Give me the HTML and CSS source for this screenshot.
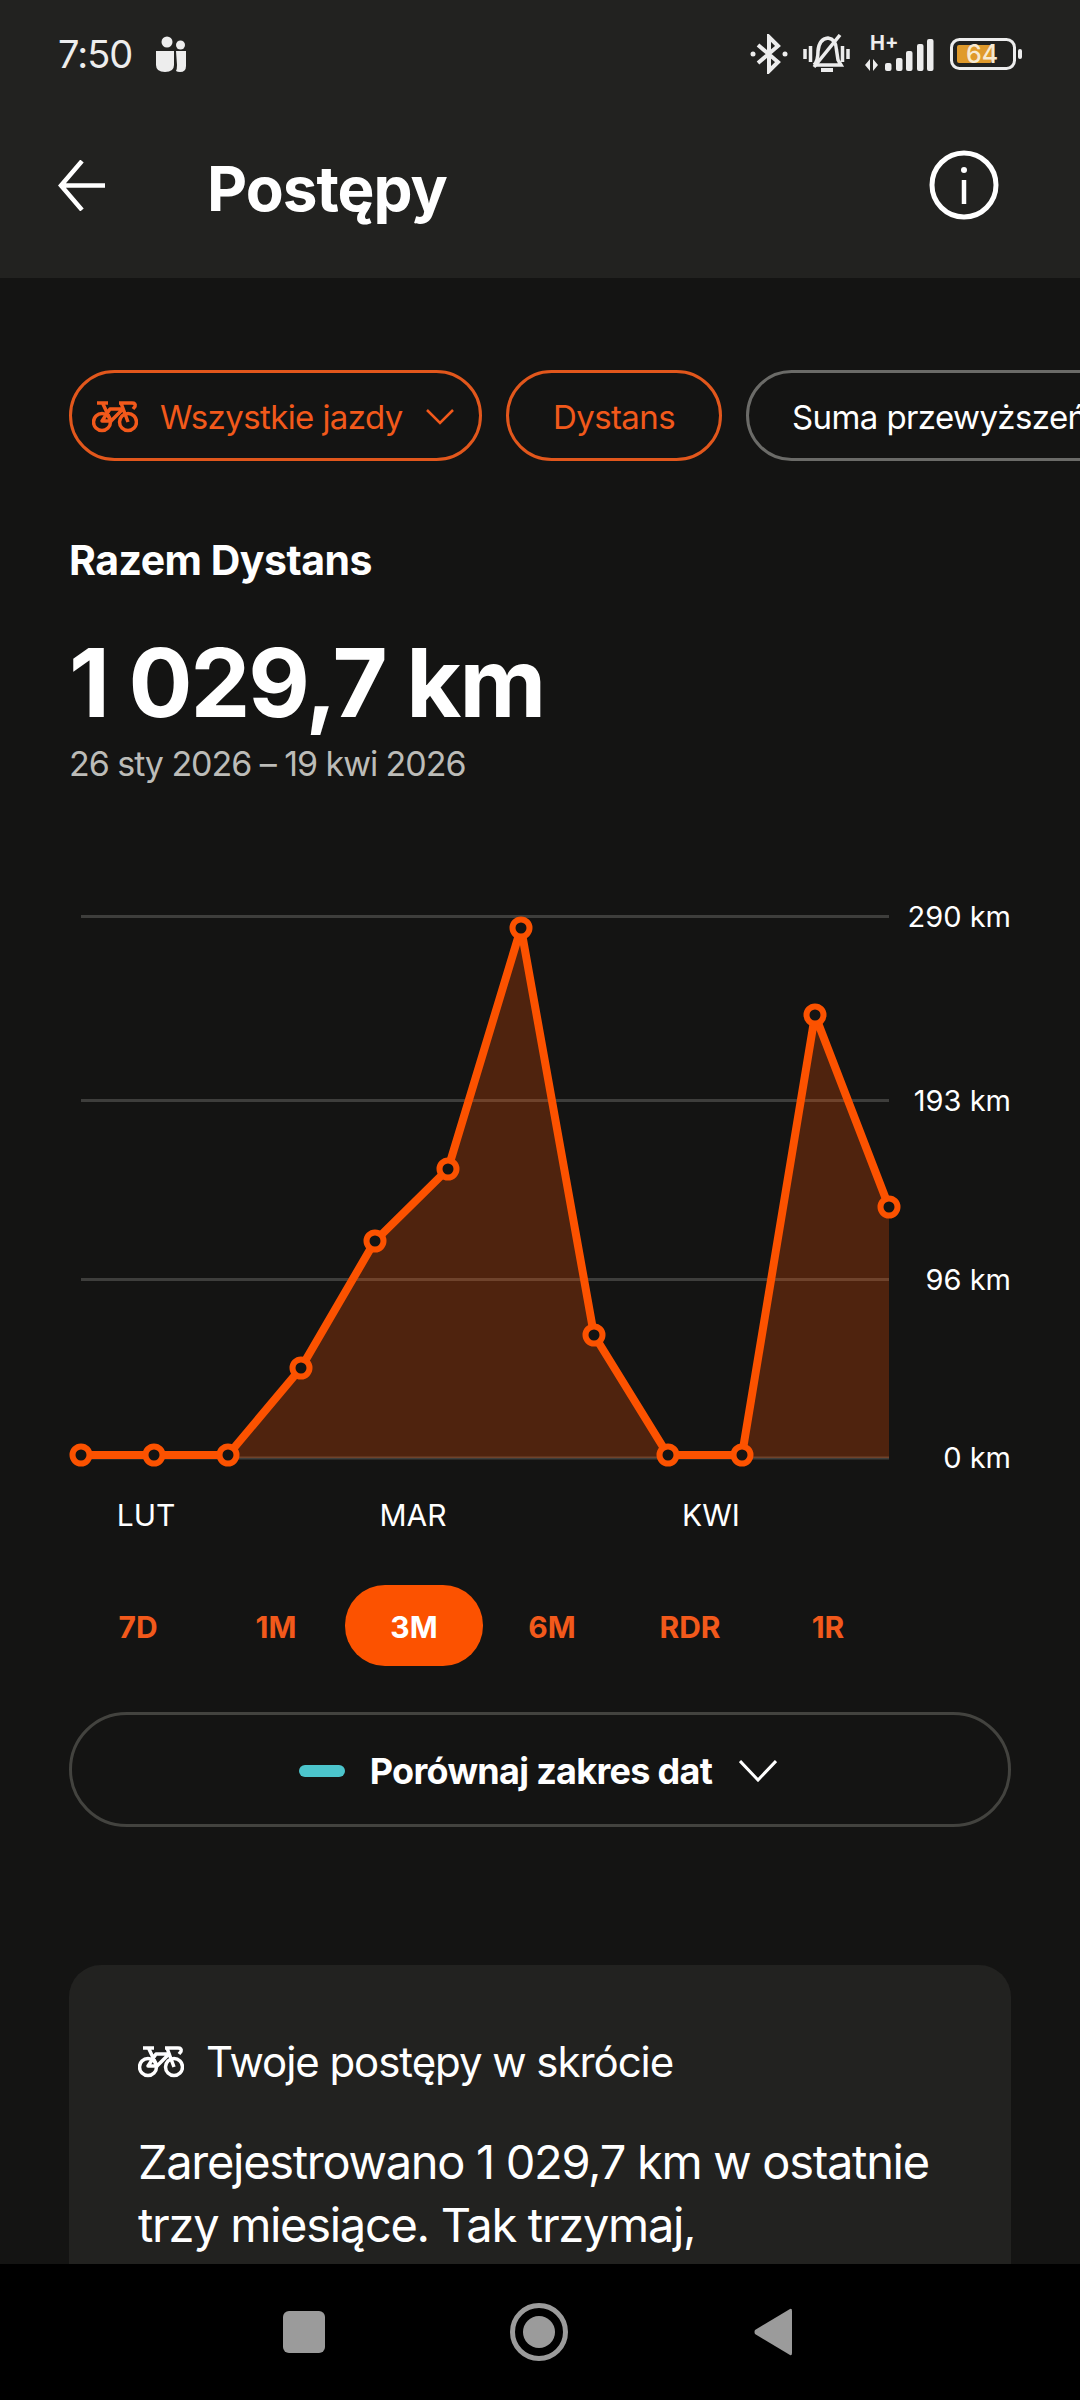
FILE: index.html
```html
<!DOCTYPE html>
<html lang="pl">
<head>
  <meta charset="UTF-8" />
  <meta name="viewport" content="width=device-width, initial-scale=1.0" />
  <title>Postępy</title>
  <link rel="stylesheet" href="styles.css">
</head>
<body>
  <svg class="defs" width="0" height="0">
    <symbol id="bike" viewBox="0 0 46 32">
      <g fill="none" stroke="currentColor" stroke-width="3.500" stroke-linejoin="round">
        <circle cx="10" cy="21" r="8.500" />
        <circle cx="36" cy="21" r="8.500" />
        <path d="M5 2H16M10.500 2L19 20H10L18 8H31L19 20M27 2H40Q44 2 43 5.500L41 8M29 2L36 21" />
      </g>
    </symbol>
  </svg>

  <header class="topbar">
    <div class="status">
      <span class="clock">7:50</span>
      <svg class="teams" width="32" height="36" viewBox="0 0 32 36" fill="#ededed">
        <circle cx="12" cy="6" r="5.500" />
        <circle cx="25.500" cy="9" r="4.500" />
        <path d="M1 15H19V29Q19 36 10 36Q1 36 1 29Z" />
        <path d="M21 15H31V30Q31 36 25 36Q22.500 36 21 35Q22 33 22 29Z" />
      </svg>
      <div class="status-right">
        <svg width="38" height="40" viewBox="0 0 38 40" fill="none" stroke="#ededed" stroke-width="4">
          <path d="M8 11L28 28L19 37V3L28 12L8 29" />
          <circle cx="3" cy="20" r="2.500" fill="#ededed" stroke="none" />
          <circle cx="35" cy="20" r="2.500" fill="#ededed" stroke="none" />
        </svg>
        <svg width="47" height="40" viewBox="0 0 47 40" fill="none" stroke="#ededed" stroke-width="3.500">
          <path d="M2 15V25M7.500 12V28M39.500 12V28M45 15V25" />
          <path d="M11 31Q15 27 15 17Q16 5 25 4Q33 5 33.500 16L35 26L38 31H11" />
          <path d="M37 1L11 33" />
          <path d="M18 36H30" stroke-width="4" />
        </svg>
        <svg width="70" height="48" viewBox="0 -4 70 48" fill="#ededed">
          <text class="net" x="5" y="16">H+</text>
          <path d="M0 31L5 25V37ZM8 37L13 31L8 25Z" />
          <rect x="20" y="29" width="6.500" height="8" rx="2" />
          <rect x="31" y="24" width="6.500" height="13" rx="2" />
          <rect x="41" y="17" width="6.500" height="20" rx="2" />
          <rect x="52" y="10" width="6.500" height="27" rx="2" />
          <rect x="62" y="5" width="6.500" height="32" rx="2" />
        </svg>
        <svg width="72" height="32" viewBox="0 0 72 32">
          <rect x="1.500" y="1.500" width="63" height="29" rx="8" fill="none" stroke="#ededed" stroke-width="3" />
          <rect x="7" y="7" width="35" height="18" rx="2" fill="#e09a2b" />
          <rect x="68" y="11" width="4" height="10" rx="2" fill="#ededed" />
          <text class="batt" x="32" y="25" text-anchor="middle">64</text>
        </svg>
      </div>
    </div>
    <div class="titlerow">
      <svg width="47" height="51" viewBox="0 0 47 51" fill="none" stroke="#fff" stroke-width="4.500">
        <path d="M24 1L3 25.500L24 50M3 25.500H47" />
      </svg>
      <h1>Postępy</h1>
      <svg class="info" width="70" height="70" viewBox="0 0 70 70" fill="none" stroke="#fff">
        <circle cx="35" cy="35" r="32" stroke-width="5" />
        <path d="M35 30V54" stroke-width="4.500" />
        <circle cx="35" cy="20" r="3" fill="#fff" stroke="none" />
      </svg>
    </div>
  </header>

  <main>
    <div class="chips">
      <div class="chip active">
        <svg class="bike" width="46" height="32"><use href="#bike" /></svg>
        <span>Wszystkie jazdy</span>
        <svg class="chev" width="28" height="16" viewBox="0 0 28 16" fill="none" stroke="currentColor" stroke-width="2.500"><path d="M1 1L14 14L27 1" /></svg>
      </div>
      <div class="chip active">Dystans</div>
      <div class="chip">Suma przewyższeń</div>
    </div>

    <h2>Razem Dystans</h2>
    <div class="total">1 029,7 km</div>
    <div class="range">26 sty 2026 – 19 kwi 2026</div>

    <svg class="chart" width="951" height="670" viewBox="69 900 951 670">
      <g stroke="#3e3e3c" stroke-width="3">
        <path d="M81 916.500H889M81 1100.500H889M81 1279.500H889M81 1458H889" />
      </g>
      <polygon class="area" points="228,1458 301,1368 375,1241 448,1169 521,928 594,1335 668,1458 742,1458 815,1015 889,1207 889,1458" />
      <polyline class="line" points="81,1455 154,1455 228,1455 301,1368 375,1241 448,1169 521,928 594,1335 668,1455 742,1455 815,1015 889,1207" />
      <g class="dots">
        <circle cx="81" cy="1455" r="8.500" />
        <circle cx="154" cy="1455" r="8.500" />
        <circle cx="228" cy="1455" r="8.500" />
        <circle cx="301" cy="1368" r="8.500" />
        <circle cx="375" cy="1241" r="8.500" />
        <circle cx="448" cy="1169" r="8.500" />
        <circle cx="521" cy="928" r="8.500" />
        <circle cx="594" cy="1335" r="8.500" />
        <circle cx="668" cy="1455" r="8.500" />
        <circle cx="742" cy="1455" r="8.500" />
        <circle cx="815" cy="1015" r="8.500" />
        <circle cx="889" cy="1207" r="8.500" />
      </g>
      <g class="yaxis">
        <text x="1011" y="927">290 km</text>
        <text x="1011" y="1111">193 km</text>
        <text x="1011" y="1290">96 km</text>
        <text x="1011" y="1468">0 km</text>
      </g>
      <g class="xaxis">
        <text x="146" y="1526">LUT</text>
        <text x="413" y="1526">MAR</text>
        <text x="711" y="1526">KWI</text>
      </g>
    </svg>

    <div class="ranges">
      <span>7D</span>
      <span>1M</span>
      <span class="on">3M</span>
      <span>6M</span>
      <span>RDR</span>
      <span>1R</span>
    </div>

    <div class="compare">
      <i class="swatch"></i>
      <span>Porównaj zakres dat</span>
      <svg class="compare-chev" width="38" height="22" viewBox="0 0 38 22" fill="none" stroke="#fff" stroke-width="3"><path d="M1 1L19 20L37 1" /></svg>
    </div>

    <section class="card">
      <div class="card-head">
        <svg class="bike" width="46" height="32"><use href="#bike" /></svg>
        <span>Twoje postępy w skrócie</span>
      </div>
      <p>Zarejestrowano 1 029,7 km w ostatnie<br>trzy miesiące. Tak trzymaj,</p>
    </section>
  </main>

  <footer class="navbar">
    <i class="nav-square"></i>
    <svg width="58" height="58" viewBox="0 0 58 58">
      <circle cx="29" cy="29" r="26.500" fill="none" stroke="#9b9b9b" stroke-width="5" />
      <circle cx="29" cy="29" r="16" fill="#9b9b9b" />
    </svg>
    <svg width="38" height="48" viewBox="0 0 38 48"><path d="M36 1Q38 0 38 3V45Q38 48 36 47L1 26Q0 24 1 22Z" fill="#9b9b9b" /></svg>
  </footer>
</body>
</html>
```

FILE: styles.css
```css
* {
  box-sizing: border-box;
}
html, body {
  margin: 0;
  padding: 0;
}
body {
  width: 1080px;
  height: 2400px;
  display: flex;
  flex-direction: column;
  overflow: hidden;
  background: #141413;
  color: #fff;
  font-family: 'Inter', 'Liberation Sans', sans-serif;
}
.defs {
  position: absolute;
}

/* top bar */
.topbar {
  height: 278px;
  flex: none;
  background: #222220;
  padding: 33px 58px 0;
}
.status {
  display: flex;
  align-items: center;
  height: 42px;
  color: #ededed;
}
.clock {
  font-size: 38px;
  letter-spacing: -1px;
  width: 97px;
}
.status-right {
  margin-left: auto;
  display: flex;
  align-items: center;
  gap: 15px;
}
.net {
  font-size: 20px;
  font-weight: 700;
}
.batt {
  font-size: 25px;
  font-weight: 500;
  fill: #f7ead2;
}
.titlerow {
  display: flex;
  align-items: center;
  margin-top: 75px;
  height: 70px;
}
.titlerow h1 {
  margin: 6px 0 0 102px;
  font-size: 62px;
  font-weight: 700;
  letter-spacing: -1px;
}
.info {
  margin-left: auto;
  margin-right: 23px;
}

main {
  flex: 1;
  min-height: 0;
  overflow: hidden;
  padding: 92px 0 0 69px;
}

/* chips */
.chips {
  display: flex;
  gap: 24px;
  width: 1011px;
  overflow: hidden;
}
.chip {
  flex: none;
  display: flex;
  align-items: center;
  height: 91px;
  padding: 2px 43px 0;
  border: 3px solid #6b6b68;
  border-radius: 46px;
  font-size: 33px;
  letter-spacing: -0.6px;
  white-space: nowrap;
}
.chip:first-child {
  padding: 2px 20px 0;
  width: 413px;
}
.chip:nth-child(2) {
  width: 216px;
  justify-content: center;
  padding: 2px 0 0;
}
.chip.active {
  border-color: #e2571c;
  color: #f2591b;
}
.chip .bike {
  margin-right: 22px;
}
.chip .chev {
  margin-left: auto;
  margin-right: 5px;
}

h2 {
  margin: 75px 0 0;
  font-size: 41px;
  line-height: 48px;
  font-weight: 700;
  letter-spacing: -0.5px;
}
.total {
  margin-top: 44px;
  font-size: 95px;
  line-height: 110px;
  font-weight: 700;
  letter-spacing: -2px;
}
.range {
  margin-top: 3px;
  font-size: 34px;
  line-height: 46px;
  color: #bcbcb8;
  letter-spacing: -1.05px;
}

/* chart */
.chart {
  display: block;
  margin-top: 113px;
}
.area {
  fill: rgba(252, 82, 0, 0.26);
}
.line {
  fill: none;
  stroke: #fc5200;
  stroke-width: 8;
  stroke-linejoin: round;
}
.dots circle {
  fill: #141413;
  stroke: #fc5200;
  stroke-width: 6;
}
.yaxis text {
  fill: #fff;
  font-size: 29px;
  text-anchor: end;
}
.xaxis text {
  fill: #fff;
  font-size: 30px;
  text-anchor: middle;
}

/* range selector */
.ranges {
  display: flex;
  margin-top: 15px;
}
.ranges span {
  width: 138px;
  height: 81px;
  display: flex;
  align-items: center;
  justify-content: center;
  padding-top: 2px;
  font-size: 30px;
  font-weight: 700;
  color: #f2591b;
  border-radius: 40px;
}
.ranges .on {
  background: #fc5200;
  color: #fff;
}

.compare {
  width: 942px;
  height: 115px;
  margin-top: 46px;
  padding: 3px 4px 0 0;
  display: flex;
  align-items: center;
  justify-content: center;
  gap: 25px;
  border: 3px solid #43433f;
  border-radius: 58px;
  font-size: 36px;
  font-weight: 700;
  letter-spacing: -0.7px;
}
.compare-chev {
  margin-left: 2px;
}
.swatch {
  width: 46px;
  height: 12px;
  border-radius: 6px;
  background: #4cc5cc;
}

/* summary card */
.card {
  width: 942px;
  height: 400px;
  margin-top: 138px;
  padding: 71px 30px 0 69px;
  background: #222220;
  border-radius: 32px;
}
.card-head {
  display: flex;
  align-items: center;
  gap: 22px;
  font-size: 42px;
  letter-spacing: -1.05px;
}
.card p {
  margin: 43px 0 0;
  font-size: 47px;
  line-height: 63px;
  letter-spacing: -1.3px;
  white-space: nowrap;
}

/* android nav */
.navbar {
  flex: none;
  height: 136px;
  background: #000;
  display: flex;
  align-items: center;
  padding: 0 0 0 283px;
}
.nav-square {
  width: 42px;
  height: 42px;
  border-radius: 6px;
  background: #9b9b9b;
  margin-right: 185px;
}
.navbar svg:last-child {
  margin-left: 186px;
}
```
